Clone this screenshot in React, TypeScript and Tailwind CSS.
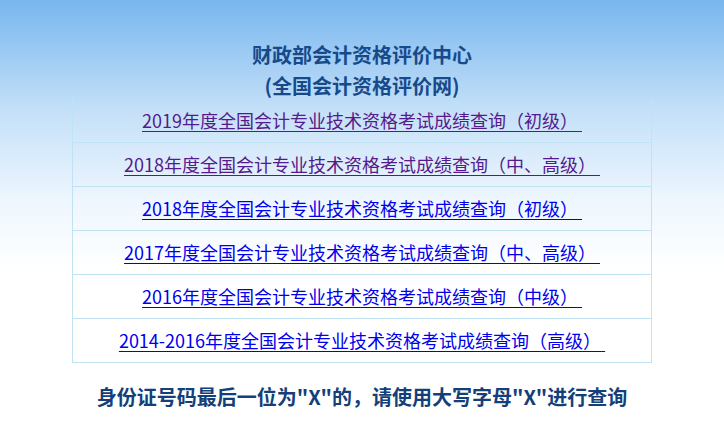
import React from "react";

const rows: { text: string; visited: boolean }[] = [
  { text: "2019年度全国会计专业技术资格考试成绩查询（初级）", visited: true },
  { text: "2018年度全国会计专业技术资格考试成绩查询（中、高级）", visited: true },
  { text: "2018年度全国会计专业技术资格考试成绩查询（初级）", visited: false },
  { text: "2017年度全国会计专业技术资格考试成绩查询（中、高级）", visited: false },
  { text: "2016年度全国会计专业技术资格考试成绩查询（中级）", visited: false },
  { text: "2014-2016年度全国会计专业技术资格考试成绩查询（高级）", visited: false },
];

export default function App() {
  return (
    <div
      className="w-[724px] h-[442px] overflow-hidden bg-[linear-gradient(to_bottom,#78b6ef_0px,#c4e0f8_110px,#eef6fe_200px,#ffffff_270px)]"
      style={{ fontFamily: '"Noto Sans CJK SC", "Noto Sans", sans-serif' }}
    >
      <div className="pt-[39px] mb-[-3px] text-center font-bold text-[20px] leading-[31px] text-[#174a8b]">
        <div>财政部会计资格评价中心</div>
        <div>(全国会计资格评价网)</div>
      </div>
      <div className="mx-[72px] w-[580px] border-x border-b border-[#bfe3f3]">
        {rows.map((r, i) => (
          <div
            key={i}
            className={`h-[44px] flex items-center justify-center text-[18px] ${i > 0 ? "border-t border-[#bfe3f3]" : ""}`}
          >
            <a
              href="#"
              className={`underline underline-offset-[3px] ${r.visited ? "text-[#551a8b]" : "text-[#0000ee]"}`}
            >
              {r.text}&nbsp;
            </a>
          </div>
        ))}
      </div>
      <div className="mt-[19px] text-center font-bold text-[20px] leading-[30px] text-[#133f7a]">
        身份证号码最后一位为"X"的，请使用大写字母"X"进行查询
      </div>
    </div>
  );
}
